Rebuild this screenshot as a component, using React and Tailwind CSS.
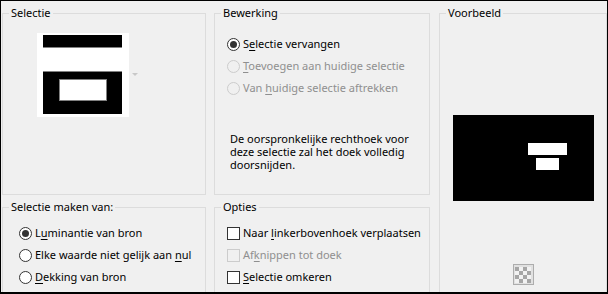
import React from 'react';

const font = { fontFamily: '"Noto Sans", "Open Sans", sans-serif' };

const Radio = ({ checked, disabled, children }) => (
  <div className="flex items-center h-[22px]">
    <span
      className={`w-[13px] h-[13px] rounded-full border flex items-center justify-center shrink-0 ${
        disabled ? 'border-[#cccccc] bg-[#f0f0f0]' : 'border-[#333333] bg-white'
      }`}
    >
      {checked && <span className="w-[7px] h-[7px] rounded-full bg-[#333333]" />}
    </span>
    <span className={`ml-[3px] whitespace-nowrap ${disabled ? 'text-[#8f8f8f]' : 'text-black'}`}>{children}</span>
  </div>
);

const Check = ({ disabled, children }) => (
  <div className="flex items-center h-[22px]">
    <span
      className={`w-[13px] h-[13px] border shrink-0 ${
        disabled ? 'border-[#cccccc] bg-[#f0f0f0]' : 'border-[#333333] bg-white'
      }`}
    />
    <span className={`ml-[3px] whitespace-nowrap ${disabled ? 'text-[#8f8f8f]' : 'text-black'}`}>{children}</span>
  </div>
);

const Group = ({ title, className, children }) => (
  <fieldset className={`border border-[#dcdcdc] ${className}`}>
    <legend className="ml-[6px] px-[2px] leading-[16px] text-black">{title}</legend>
    {children}
  </fieldset>
);

const u = (s) => <span className="underline underline-offset-2">{s}</span>;

export default function App() {
  return (
    <div
      className="w-[608px] h-[294px] bg-[#f0f0f0] border border-black border-b-2 overflow-hidden text-[11px] flex pl-[1px] gap-[8px]"
      style={font}
    >
      <div className="w-[204px] flex flex-col gap-[4px] pt-[4px]">
        <Group title="Selectie" className="h-[190px] shrink-0">
          <div className="flex items-start mt-[12px] ml-[34px]">
            <svg width="92" height="84" viewBox="0 0 92 84">
              <rect x="0" y="0" width="92" height="84" fill="#ffffff" />
              <rect x="6" y="2" width="79" height="13" fill="#000000" />
              <rect x="6" y="14" width="79" height="1" fill="#808080" />
              <rect x="6" y="38" width="79" height="43" fill="#000000" />
              <rect x="6" y="38" width="79" height="1" fill="#808080" />
              <rect x="22.5" y="46.5" width="47" height="21" fill="#ffffff" stroke="#808080" strokeWidth="1" />
            </svg>
            <svg width="6" height="4" viewBox="0 0 6 4" className="ml-[3px] mt-[40px]">
              <path d="M0 0 H6 L3 3 Z" fill="#c8c8c8" />
            </svg>
          </div>
        </Group>
        <Group title="Selectie maken van:" className="h-[120px] shrink-0">
          <div className="pl-[16px] pt-[7px]">
            <Radio checked>L{u('u')}minantie van bron</Radio>
            <Radio>Elke waarde niet gelijk aan {u('n')}ul</Radio>
            <Radio>{u('D')}ekking van bron</Radio>
          </div>
        </Group>
      </div>

      <div className="w-[216px] flex flex-col gap-[4px] pt-[4px]">
        <Group title="Bewerking" className="h-[190px] shrink-0">
          <div className="pl-[12px] pt-[12px]">
            <Radio checked>S{u('e')}lectie vervangen</Radio>
            <Radio disabled>{u('T')}oevoegen aan huidige selectie</Radio>
            <Radio disabled>Van {u('h')}uidige selectie aftrekken</Radio>
            <p className="mt-[33px] ml-[3px] leading-[13px] text-black w-[186px]">
              De oorspronkelijke rechthoek voor deze selectie zal het doek volledig doorsnijden.
            </p>
          </div>
        </Group>
        <Group title="Opties" className="h-[120px] shrink-0">
          <div className="pl-[12px] pt-[7px]">
            <Check>Naar {u('l')}inkerbovenhoek verplaatsen</Check>
            <Check disabled>Af{u('k')}nippen tot doek</Check>
            <Check>{u('S')}electie omkeren</Check>
          </div>
        </Group>
      </div>

      <div className="w-[168px] pt-[4px] ml-[1px]">
        <Group title="Voorbeeld" className="h-[320px]">
          <div className="flex flex-col items-center">
            <svg width="141" height="86" viewBox="0 0 141 86" className="mt-[94px] block">
              <rect x="0" y="0" width="141" height="86" fill="#000000" />
              <rect x="75" y="28" width="39" height="12" fill="#ffffff" />
              <rect x="83" y="43" width="23" height="12" fill="#ffffff" />
            </svg>
            <div className="mt-[63px] w-[21px] h-[21px] border border-[#adadad] bg-[#e1e1e1] flex items-center justify-center">
              <svg width="16" height="16" viewBox="0 0 16 16">
                <rect x="0" y="0" width="16" height="16" fill="#f2f2f2" />
                <path d="M0 0h4v4H0zM8 0h4v4H8zM4 4h4v4H4zM12 4h4v4h-4zM0 8h4v4H0zM8 8h4v4H8zM4 12h4v4H4zM12 12h4v4h-4z" fill="#a6a6a6" />
              </svg>
            </div>
          </div>
        </Group>
      </div>
    </div>
  );
}
